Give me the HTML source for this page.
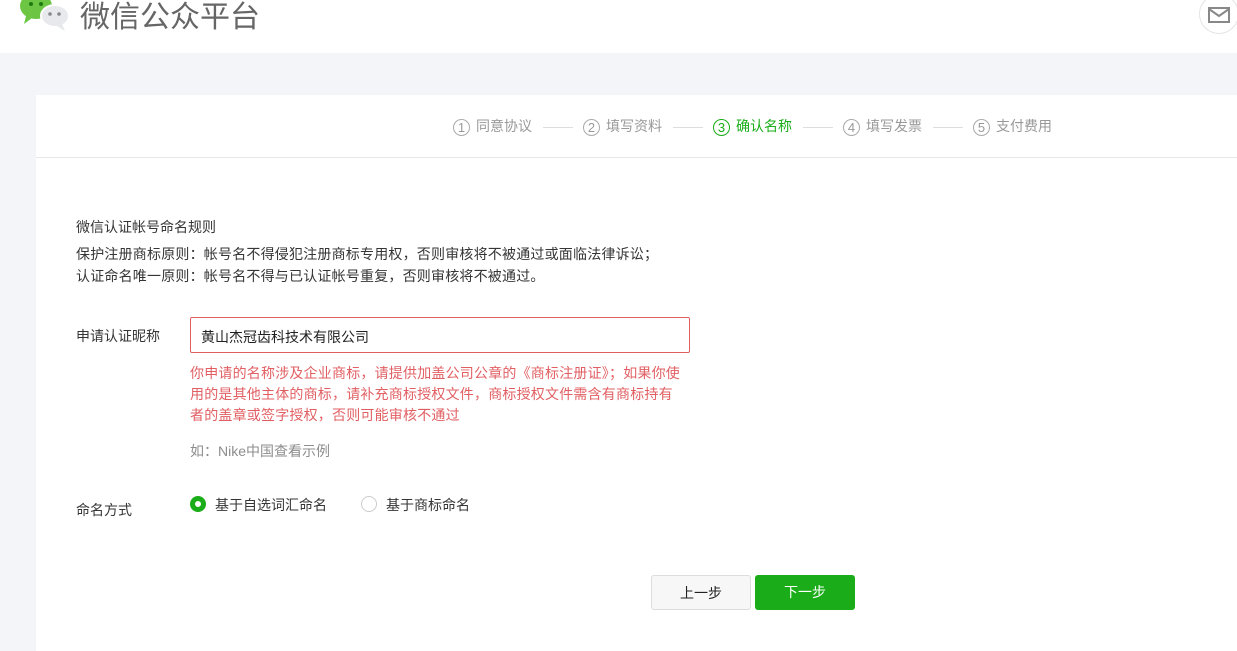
<!DOCTYPE html>
<html><head><meta charset="utf-8"><style>
*{margin:0;padding:0;box-sizing:border-box}
body{width:1237px;height:651px;overflow:hidden;background:#f4f5f9;font-family:"Liberation Sans","Noto Sans CJK SC",sans-serif;position:relative;color:#353535}
.hd{position:absolute;left:0;top:0;width:1237px;height:53px;background:#fff}
.title{position:absolute;left:80px;top:-8px;font-size:30px;color:#666}
.mail{position:absolute;left:1199px;top:-6px;width:40px;height:40px;border:1px solid #e4e4e4;border-radius:50%}
.card{position:absolute;left:36px;top:95px;width:1201px;height:556px;background:#fff}
.steps{position:absolute;left:0;top:0;width:1201px;height:63px;border-bottom:1px solid #e7e7eb}
.st{position:absolute;top:21px;font-size:14px;color:#999;white-space:nowrap}
.st .n{display:inline-block;width:17px;height:17px;border:1px solid #aaa;border-radius:50%;text-align:center;line-height:15px;font-size:13px;margin-right:6px;vertical-align:-1px}
.st.on{color:#1aad19}.st.on .n{border-color:#1aad19}
.ln{position:absolute;top:32px;width:30px;height:1px;background:#ddd}
.t{position:absolute;font-size:14px;white-space:nowrap}
.inp{position:absolute;left:154px;top:222px;width:500px;height:36px;border:1px solid #e15f63;border-radius:2px;font-size:14px;padding:9px 10px;color:#222}
.err{position:absolute;left:154px;top:268px;width:496px;font-size:14px;line-height:21px;color:#e15f63;letter-spacing:0.2px}
.rad{position:absolute;top:401px;width:16px;height:16px;border:1px solid #ccc;border-radius:50%}
.btn{position:absolute;top:480px;width:100px;height:35px;font-size:14px;text-align:center;line-height:35px;border-radius:3px}
</style></head><body>
<div class="hd">
<svg style="position:absolute;left:20px;top:-6px" width="52" height="42" viewBox="0 0 52 42"><ellipse cx="16" cy="12" rx="16" ry="13" fill="#6cc644"/><path d="M6 22 L4 30 L12 24Z" fill="#6cc644"/><circle cx="11" cy="10" r="2" fill="#1e7a10"/><circle cx="21" cy="10" r="2" fill="#1e7a10"/><ellipse cx="35" cy="22" rx="14" ry="11" fill="#e8e9ed" stroke="#fff" stroke-width="2"/><path d="M42 30 L45 37 L37 32Z" fill="#e8e9ed"/><circle cx="30" cy="20" r="1.8" fill="#888"/><circle cx="39" cy="20" r="1.8" fill="#888"/></svg>
<div class="title">微信公众平台</div>
<div class="mail"><svg style="position:absolute;left:8px;top:12px" width="22" height="16"><rect x="1" y="1" width="20" height="14" fill="none" stroke="#888" stroke-width="2"/><path d="M1 2 L11 9 L21 2" fill="none" stroke="#888" stroke-width="2"/></svg></div>
</div>
<div class="card">
<div class="steps">
<div class="st" style="left:417px"><span class="n">1</span>同意协议</div><div class="ln" style="left:507px"></div>
<div class="st" style="left:547px"><span class="n">2</span>填写资料</div><div class="ln" style="left:637px"></div>
<div class="st on" style="left:677px"><span class="n">3</span>确认名称</div><div class="ln" style="left:767px"></div>
<div class="st" style="left:807px"><span class="n">4</span>填写发票</div><div class="ln" style="left:897px"></div>
<div class="st" style="left:937px"><span class="n">5</span>支付费用</div>
</div>
<div class="t" style="left:40px;top:122px">微信认证帐号命名规则</div>
<div class="t" style="left:40px;top:149px;letter-spacing:0.2px">保护注册商标原则：帐号名不得侵犯注册商标专用权，否则审核将不被通过或面临法律诉讼；</div>
<div class="t" style="left:40px;top:171px;letter-spacing:0.2px">认证命名唯一原则：帐号名不得与已认证帐号重复，否则审核将不被通过。</div>
<div class="t" style="left:40px;top:231px">申请认证昵称</div>
<div class="inp">黄山杰冠齿科技术有限公司</div>
<div class="err">你申请的名称涉及企业商标，请提供加盖公司公章的《商标注册证》；如果你使用的是其他主体的商标，请补充商标授权文件，商标授权文件需含有商标持有者的盖章或签字授权，否则可能审核不通过</div>
<div class="t" style="left:154px;top:346px;color:#8d8d8d">如：Nike中国查看示例</div>
<div class="t" style="left:40px;top:405px">命名方式</div>
<div class="rad" style="left:154px;border:5px solid #1aad19"></div>
<div class="t" style="left:179px;top:400px">基于自选词汇命名</div>
<div class="rad" style="left:325px"></div>
<div class="t" style="left:350px;top:400px">基于商标命名</div>
<div class="btn" style="left:615px;background:#f7f7f7;border:1px solid #ddd;color:#222">上一步</div>
<div class="btn" style="left:719px;background:#1aad19;color:#fff">下一步</div>
</div>
</body></html>
